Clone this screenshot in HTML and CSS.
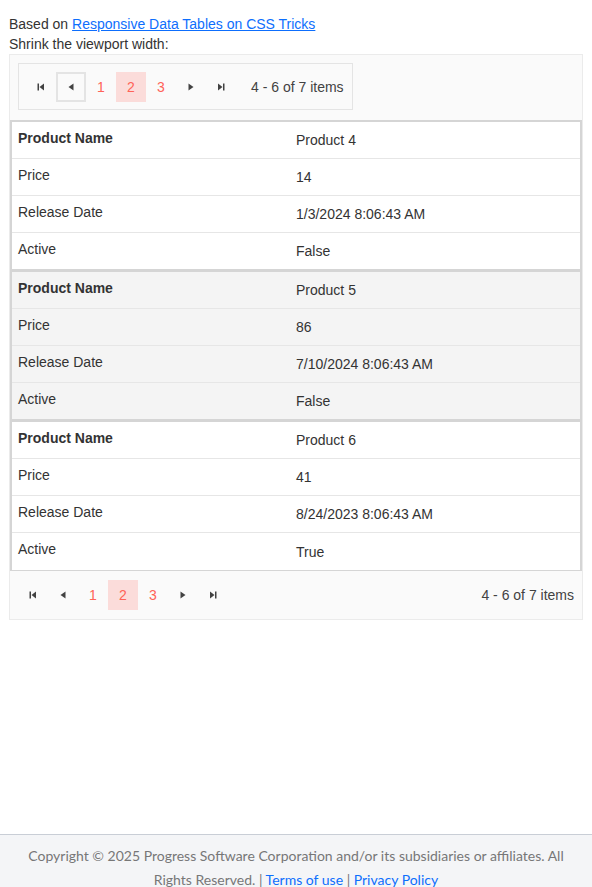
FILE: index.html
```html
<!DOCTYPE html>
<html lang="en">
<head>
    <meta charset="UTF-8">
    <meta name="viewport" content="width=device-width, initial-scale=1.0">
    <title>Responsive Grid</title>
    <link rel="stylesheet" href="styles.css">
</head>
<body>
    <div class="content">
        <p class="intro">
            Based on <a href="#">Responsive Data Tables on CSS Tricks</a><br>
            Shrink the viewport width:
        </p>
        <div class="grid">
            <div class="toolbar">
                <div class="pager pager-top">
                    <div class="pager-buttons">
                        <span class="pager-btn">
                            <svg width="8" height="8" viewBox="0 0 8 8"><rect x="0.5" y="0.5" width="1.5" height="7" fill="#424242"/><polygon points="7,0.5 7,7.5 2.5,4" fill="#424242"/></svg>
                        </span>
                        <span class="pager-btn focused">
                            <svg width="8" height="8" viewBox="0 0 8 8"><polygon points="6.5,0.5 6.5,7.5 1.5,4" fill="#424242"/></svg>
                        </span>
                        <span class="pager-btn page">1</span>
                        <span class="pager-btn page selected">2</span>
                        <span class="pager-btn page">3</span>
                        <span class="pager-btn">
                            <svg width="8" height="8" viewBox="0 0 8 8"><polygon points="1.5,0.5 1.5,7.5 6.5,4" fill="#424242"/></svg>
                        </span>
                        <span class="pager-btn">
                            <svg width="8" height="8" viewBox="0 0 8 8"><polygon points="1,0.5 1,7.5 5.5,4" fill="#424242"/><rect x="6" y="0.5" width="1.5" height="7" fill="#424242"/></svg>
                        </span>
                    </div>
                    <span class="pager-info">4 - 6 of 7 items</span>
                </div>
            </div>

            <div class="records">
                <div class="record">
                    <div class="row"><span class="label head">Product Name</span><span class="value">Product 4</span></div>
                    <div class="row"><span class="label">Price</span><span class="value">14</span></div>
                    <div class="row"><span class="label">Release Date</span><span class="value">1/3/2024 8:06:43 AM</span></div>
                    <div class="row"><span class="label">Active</span><span class="value">False</span></div>
                </div>
                <div class="record alt">
                    <div class="row"><span class="label head">Product Name</span><span class="value">Product 5</span></div>
                    <div class="row"><span class="label">Price</span><span class="value">86</span></div>
                    <div class="row"><span class="label">Release Date</span><span class="value">7/10/2024 8:06:43 AM</span></div>
                    <div class="row"><span class="label">Active</span><span class="value">False</span></div>
                </div>
                <div class="record">
                    <div class="row"><span class="label head">Product Name</span><span class="value">Product 6</span></div>
                    <div class="row"><span class="label">Price</span><span class="value">41</span></div>
                    <div class="row"><span class="label">Release Date</span><span class="value">8/24/2023 8:06:43 AM</span></div>
                    <div class="row"><span class="label">Active</span><span class="value">True</span></div>
                </div>
            </div>

            <div class="pager pager-bottom">
                <div class="pager-buttons">
                    <span class="pager-btn">
                        <svg width="8" height="8" viewBox="0 0 8 8"><rect x="0.5" y="0.5" width="1.5" height="7" fill="#424242"/><polygon points="7,0.5 7,7.5 2.5,4" fill="#424242"/></svg>
                    </span>
                    <span class="pager-btn">
                        <svg width="8" height="8" viewBox="0 0 8 8"><polygon points="6.5,0.5 6.5,7.5 1.5,4" fill="#424242"/></svg>
                    </span>
                    <span class="pager-btn page">1</span>
                    <span class="pager-btn page selected">2</span>
                    <span class="pager-btn page">3</span>
                    <span class="pager-btn">
                        <svg width="8" height="8" viewBox="0 0 8 8"><polygon points="1.5,0.5 1.5,7.5 6.5,4" fill="#424242"/></svg>
                    </span>
                    <span class="pager-btn">
                        <svg width="8" height="8" viewBox="0 0 8 8"><polygon points="1,0.5 1,7.5 5.5,4" fill="#424242"/><rect x="6" y="0.5" width="1.5" height="7" fill="#424242"/></svg>
                    </span>
                </div>
                <span class="pager-info">4 - 6 of 7 items</span>
            </div>
        </div>
    </div>

    <footer>
        Copyright &copy; 2025 Progress Software Corporation and/or its subsidiaries or affiliates. All Rights Reserved. | <a href="#">Terms of use</a> | <a href="#">Privacy Policy</a>
    </footer>
</body>
</html>
```

FILE: styles.css
```css
* {
    box-sizing: border-box;
}

body {
    margin: 0;
    font-family: "Liberation Sans", Arial, sans-serif;
    font-size: 14px;
    color: #424242;
    background-color: #fff;
}

.content {
    min-height: 834px;
    padding: 14px 9px 0;
}

.intro {
    margin: 0;
    line-height: 20px;
    color: #333;
}

.intro a {
    color: #0d6efd;
}

.grid {
    border: 1px solid #ebebeb;
    background-color: #fafafa;
}

.toolbar {
    padding: 8px 8px 10px;
}

.pager {
    display: flex;
    align-items: center;
}

.pager-top {
    display: inline-flex;
    border: 1px solid #e4e4e4;
    padding: 8px 8px 7px 7px;
}

.pager-bottom {
    justify-content: space-between;
    padding: 9px 8px;
}

.pager-buttons {
    display: flex;
}

.pager-btn {
    width: 30px;
    height: 30px;
    display: flex;
    align-items: center;
    justify-content: center;
    line-height: 1;
}

.pager-btn.page {
    color: #ff6358;
    font-size: 14px;
}

.pager-btn.selected {
    background-color: #fbdcda;
}

.pager-btn.focused {
    box-shadow: inset 0 0 0 2px #e4e4e4;
}

.pager-info {
    margin-left: 15px;
    color: #424242;
}

.record {
    background-color: #fff;
    border: 2px solid #d5d5d5;
    border-bottom: none;
}

.record.alt {
    background-color: #f4f4f4;
}

.record:last-child {
    border-bottom: 1px solid #d5d5d5;
}

.row {
    display: grid;
    grid-template-columns: 284px 1fr;
    height: 37px;
    border-bottom: 1px solid #e6e6e6;
}

.record .row:last-child {
    border-bottom-color: #d5d5d5;
}

.record:last-child .row:last-child {
    border-bottom: none;
}

.label {
    padding: 8px 6px 0;
    line-height: 16px;
    color: #333;
}

.label.head {
    font-weight: bold;
}

.value {
    align-self: center;
    line-height: 16px;
    color: #333;
}

footer {
    border-top: 1px solid #c9ced6;
    background-color: #f4f5f7;
    padding: 9px 15px 10px;
    text-align: center;
    font-family: Lato, sans-serif;
    font-size: 14px;
    line-height: 24px;
    color: #777;
}

footer a {
    color: #0d6efd;
    text-decoration: none;
}
```
